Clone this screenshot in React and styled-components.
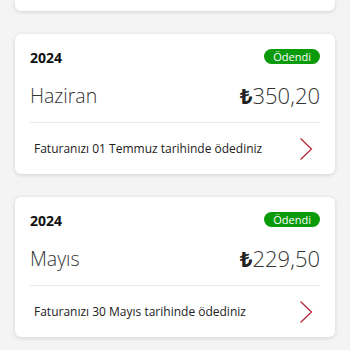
import React from "react";
import styled, { createGlobalStyle } from "styled-components";

const Global = createGlobalStyle`
  html, body { margin: 0; padding: 0; background: #f4f4f4; }
  body { font-family: "Open Sans", "Noto Sans", sans-serif; color: #222; }
`;

const Page = styled.div`
  width: 350px;
  height: 350px;
  overflow: hidden;
  display: flex;
  flex-direction: column;
  gap: 23px;
  padding: 0 15px;
  box-sizing: border-box;
`;

const Stub = styled.div`
  height: 11px;
  background: #fff;
  border-radius: 0 0 6px 6px;
  box-shadow: 0 1px 4px rgba(0, 0, 0, 0.14);
  flex-shrink: 0;
`;

const Card = styled.div`
  background: #fff;
  border-radius: 6px;
  box-shadow: 0 1px 4px rgba(0, 0, 0, 0.14);
  padding: 14px 15px 0;
  height: 140px;
  box-sizing: border-box;
  flex-shrink: 0;
  display: flex;
  flex-direction: column;
`;

const Header = styled.div`
  display: flex;
  justify-content: space-between;
  align-items: center;
  height: 16px;
`;

const Year = styled.span`
  font-size: 14px;
  font-weight: 700;
  color: #111;
  line-height: 16px;
  padding-top: 4px;
`;

const Badge = styled.span`
  background: #0a9a0a;
  color: #fff;
  font-size: 11px;
  line-height: 15px;
  height: 15px;
  padding: 0 9px;
  border-radius: 8px;
`;

const Main = styled.div`
  display: flex;
  justify-content: space-between;
  align-items: center;
  margin-top: 16px;
  height: 30px;
`;

const Name = styled.span`
  font-size: 19.5px;
  font-weight: 300;
  color: #333;
`;

const Price = styled.span`
  font-size: 22px;
  font-weight: 300;
  color: #333;
`;

const Lira = styled.span`
  font-weight: 700;
  color: #222;
`;

const Divider = styled.div`
  height: 1px;
  background: #e8e8e8;
  margin-top: 12px;
`;

const Footer = styled.div`
  flex: 1;
  display: flex;
  align-items: center;
  justify-content: space-between;
  padding: 0 7px 0 4px;
`;

const Note = styled.span`
  font-size: 12px;
  color: #222;
`;

const Chevron = () => (
  <svg width="14" height="24" viewBox="0 0 14 24">
    <path d="M1.5 1.5 L12.5 12 L1.5 22.5" fill="none" stroke="#b8283a" strokeWidth="1.3" />
  </svg>
);

const bills = [
  { year: "2024", month: "Haziran", amount: "350,20", note: "Faturanızı 01 Temmuz tarihinde ödediniz" },
  { year: "2024", month: "Mayıs", amount: "229,50", note: "Faturanızı 30 Mayıs tarihinde ödediniz" },
];

export default function App() {
  return (
    <>
      <Global />
      <Page>
        <Stub />
        {bills.map((b) => (
          <Card key={b.month}>
            <Header>
              <Year>{b.year}</Year>
              <Badge>Ödendi</Badge>
            </Header>
            <Main>
              <Name>{b.month}</Name>
              <Price><Lira>₺</Lira>{b.amount}</Price>
            </Main>
            <Divider />
            <Footer>
              <Note>{b.note}</Note>
              <Chevron />
            </Footer>
          </Card>
        ))}
      </Page>
    </>
  );
}
